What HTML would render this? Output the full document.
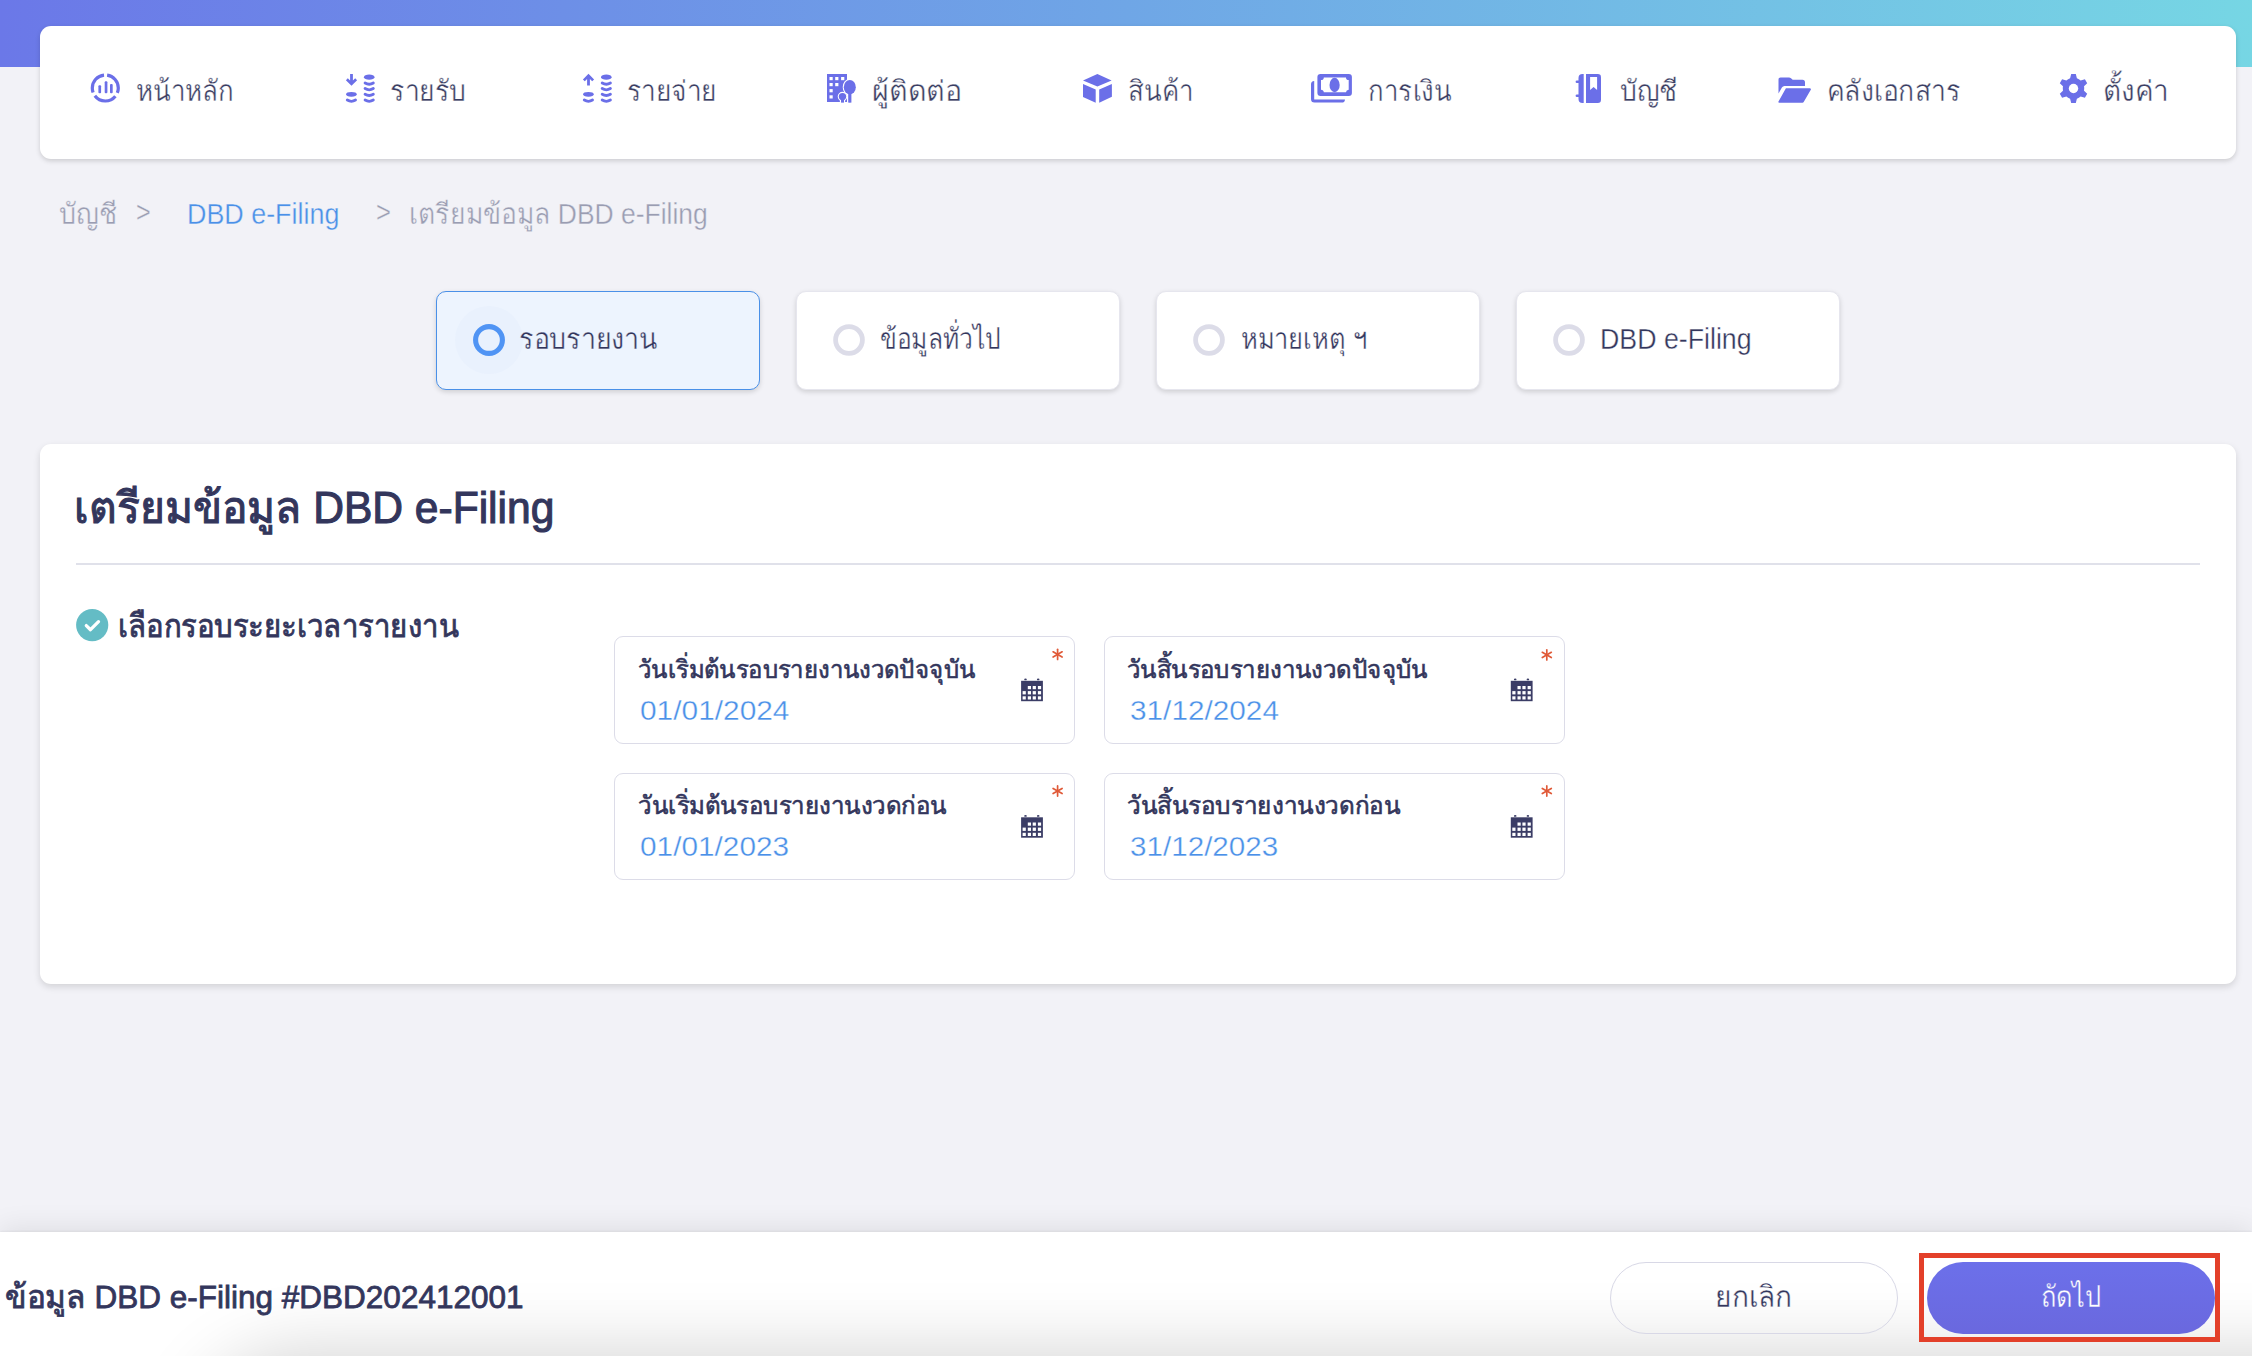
<!DOCTYPE html>
<html><head><meta charset="utf-8">
<style>
*{box-sizing:border-box;margin:0;padding:0}
html,body{width:2252px;height:1356px;overflow:hidden}
body{background:#f2f2f7;font-family:"Liberation Sans",sans-serif;color:#33365c;position:relative}
.tx{position:absolute;white-space:nowrap;transform-origin:0 0}
.abs{position:absolute}
.hdr{left:0;top:0;width:2252px;height:67px;background:linear-gradient(90deg,#6b78e8 0%,#6fa6e6 50%,#76d6e4 100%)}
.nav{left:40px;top:26px;width:2196px;height:133px;background:#fff;border-radius:11px;box-shadow:0 2px 5px rgba(0,0,0,.16)}
.step{top:291px;width:324px;height:99px;background:#fff;border-radius:10px;box-shadow:0 2px 5px rgba(0,0,0,.15);border:1px solid #e6e6ee}
.step.on{background:#edf4fe;border:1.5px solid #4a90e8}
.card{left:40px;top:444px;width:2196px;height:540px;background:#fff;border-radius:11px;box-shadow:0 3px 7px rgba(0,0,0,.13)}
.hr{left:76px;top:562.5px;width:2124px;height:2px;background:#e0e1ea}
.fld{width:461px;height:107.5px;border:1.5px solid #dcdce8;border-radius:9px;background:#fff}
.foot{left:0;top:1232px;width:2252px;height:124px;background:#fff;box-shadow:0 -4px 26px rgba(0,0,0,.085),0 -1px 2px rgba(0,0,0,.05);overflow:hidden}
.fshadow{left:200px;top:127px;width:2300px;height:200px;border-radius:110px;box-shadow:0 0 70px 8px rgba(0,0,0,.17);background:#bbb}
.cancel{left:1610px;top:1262px;width:288px;height:72px;border-radius:36px;border:1.5px solid #d8d8e6}
.next{left:1927px;top:1262px;width:288px;height:72px;border-radius:36px;background:linear-gradient(180deg,#6c70ea,#6a68de)}
.hl{left:1919px;top:1253px;width:301px;height:89px;border:5px solid #e3402a}
</style></head><body>
<div class="abs hdr"></div>
<div class="abs nav"></div>

<!-- nav icons -->
<svg class="abs" style="left:0;top:0" width="2252" height="160" viewBox="0 0 2252 160">
 <g fill="#6b6fe8">
  <!-- home dashboard -->
  <circle cx="105.3" cy="88" r="13" fill="none" stroke="#6b6fe8" stroke-width="3.2" stroke-dasharray="23.5 3.73" stroke-dashoffset="25.35" transform="rotate(-90 105.3 88)"/>
  <rect x="98.4" y="85.3" width="2.7" height="8" rx="1"/>
  <rect x="104.7" y="81.3" width="2.7" height="12" rx="1"/>
  <rect x="110" y="84" width="2.7" height="9.3" rx="1"/>
  <!-- income -->
  <path d="M350.1 74h2.8v6.6l2.3-2.3 1.9 1.9-5.6 5.6-5.6-5.6 1.9-1.9 2.3 2.3z"/>
  <ellipse cx="351.4" cy="94.35" rx="5.3" ry="2.4"/>
  <path d="M347.3 100.10Q351.4 102.60 355.5 100.10" fill="none" stroke="#6b6fe8" stroke-width="2.9" stroke-linecap="round"/>
  <ellipse cx="369.2" cy="77.15" rx="5.3" ry="2.55"/>
  <path d="M365.1 83.00Q369.2 85.50 373.3 83.00" fill="none" stroke="#6b6fe8" stroke-width="2.9" stroke-linecap="round"/>
  <path d="M365.1 88.60Q369.2 91.10 373.3 88.60" fill="none" stroke="#6b6fe8" stroke-width="2.9" stroke-linecap="round"/>
  <path d="M365.1 94.30Q369.2 96.80 373.3 94.30" fill="none" stroke="#6b6fe8" stroke-width="2.9" stroke-linecap="round"/>
  <path d="M365.1 100.10Q369.2 102.60 373.3 100.10" fill="none" stroke="#6b6fe8" stroke-width="2.9" stroke-linecap="round"/>
  <!-- expense -->
  <path d="M587.1 85.6h2.8v-6.6l2.3 2.3 1.9-1.9-5.6-5.6-5.6 5.6 1.9 1.9 2.3-2.3z"/>
  <ellipse cx="588.4" cy="94.35" rx="5.3" ry="2.4"/>
  <path d="M584.3 100.10Q588.4 102.60 592.5 100.10" fill="none" stroke="#6b6fe8" stroke-width="2.9" stroke-linecap="round"/>
  <ellipse cx="606.3" cy="77.15" rx="5.3" ry="2.55"/>
  <path d="M602.2 83.00Q606.3 85.50 610.4 83.00" fill="none" stroke="#6b6fe8" stroke-width="2.9" stroke-linecap="round"/>
  <path d="M602.2 88.60Q606.3 91.10 610.4 88.60" fill="none" stroke="#6b6fe8" stroke-width="2.9" stroke-linecap="round"/>
  <path d="M602.2 94.30Q606.3 96.80 610.4 94.30" fill="none" stroke="#6b6fe8" stroke-width="2.9" stroke-linecap="round"/>
  <path d="M602.2 100.10Q606.3 102.60 610.4 100.10" fill="none" stroke="#6b6fe8" stroke-width="2.9" stroke-linecap="round"/>
  <!-- contacts building -->
  <rect x="827" y="74" width="20" height="28"/>
  <g fill="#fff">
   <rect x="829.5" y="77" width="3.2" height="3.2"/><rect x="835.2" y="77" width="3.2" height="3.2"/><rect x="841.1" y="77" width="3.2" height="3.2"/>
   <rect x="829.5" y="83" width="3.2" height="3.2"/><rect x="835.2" y="83" width="3.2" height="3.2"/>
   <rect x="829.5" y="89.1" width="3.2" height="3.2"/>
   <rect x="829.5" y="95.3" width="3.2" height="3.2"/>
  </g>
  <g stroke="#fff" stroke-width="2.2">
   <ellipse cx="849.8" cy="87.2" rx="6" ry="7.3"/>
   <rect x="848.2" y="93" width="3.2" height="10.5"/>
   <circle cx="842.5" cy="96.6" r="3.7"/>
   <rect x="841" y="98" width="3" height="5.5"/>
  </g>
  <ellipse cx="849.8" cy="87.2" rx="6" ry="7.3"/>
  <rect x="848.2" y="93" width="3.2" height="9.6"/>
  <circle cx="842.5" cy="96.6" r="3.7"/>
  <rect x="841" y="98" width="3" height="4.6"/>
  <!-- cube -->
  <path d="M1097.4 73.9L1111.6 80.5 1097.4 86.6 1083 80.5z"/>
  <path d="M1083 84L1095.7 89.4 1095.7 102.7 1083 97z"/>
  <path d="M1099.2 89.4L1111.9 84 1111.9 96.7 1099.2 102.7z"/>
  <!-- money -->
  <path d="M1311 84.5a3.5 3.5 0 0 1 3.2-3.5v18.4h30.8a3.5 3.5 0 0 1-3.5 3.2h-27a3.5 3.5 0 0 1-3.5-3.5z"/>
  <rect x="1317.4" y="73.9" width="34.5" height="22" rx="3.2"/>
  <path fill="#fff" d="M1323.8 77.4h22.2a2.8 2.8 0 0 0 2.7 2.7v9.6a2.8 2.8 0 0 0-2.7 2.6h-22.2a2.8 2.8 0 0 0-2.8-2.6v-9.6a2.8 2.8 0 0 0 2.8-2.7z"/>
  <ellipse cx="1334.6" cy="85" rx="5.1" ry="7.2"/>
  <!-- book -->
  <path d="M1578.5 78a4 4 0 0 1 4-4h1.2v29h-1.2a4 4 0 0 1-4-4v-2h-1.6a1.3 1.3 0 0 1 0-2.6h1.6v-11.4h-1.6a1.3 1.3 0 0 1 0-2.6h1.6z"/>
  <path d="M1586 74h11.8a3.2 3.2 0 0 1 3.2 3.2v22.6a3.2 3.2 0 0 1-3.2 3.2h-11.8z"/>
  <path fill="#fff" d="M1590.1 77h7v12.9l-3.5-2.9-3.5 2.9z"/>
  <!-- folder -->
  <path d="M1778.5 79.5a2 2 0 0 1 2-2h8.5a3 3 0 0 1 2 .8l1.7 1.4h9.8a2.5 2.5 0 0 1 2.5 2.5v3.8h-20.5a3 3 0 0 0-2.6 1.5l-3.4 6.1z"/>
  <path d="M1785.9 88.3h24a1 1 0 0 1 .9 1.5l-7.1 12.2a1.5 1.5 0 0 1-1.2.7h-23.2a.9.9 0 0 1-.8-1.3z"/>
  <!-- gear -->
  <path d="M2070.10 78.30L2071.20 74.00L2075.80 74.00L2076.90 78.30A10.2 10.2 0 0 1 2080.63 80.46L2084.91 79.26L2087.21 83.24L2084.03 86.34A10.2 10.2 0 0 1 2084.03 90.66L2087.21 93.76L2084.91 97.74L2080.63 96.54A10.2 10.2 0 0 1 2076.90 98.70L2075.80 103.00L2071.20 103.00L2070.10 98.70A10.2 10.2 0 0 1 2066.37 96.54L2062.09 97.74L2059.79 93.76L2062.97 90.66A10.2 10.2 0 0 1 2062.97 86.34L2059.79 83.24L2062.09 79.26L2066.37 80.46A10.2 10.2 0 0 1 2070.10 78.30Z"/>
  <circle cx="2073.5" cy="88.5" r="4.7" fill="#fff"/>
  </g>
</svg>

<!-- steps -->
<div class="abs step on" style="left:436px"></div>
<div class="abs step" style="left:796px"></div>
<div class="abs step" style="left:1156px"></div>
<div class="abs step" style="left:1516px"></div>
<svg class="abs" style="left:0;top:280px" width="2252" height="120" viewBox="0 280 2252 120">
 <circle cx="489" cy="340" r="34" fill="#e9f1fd"/>
 <circle cx="489" cy="340" r="13.4" fill="none" stroke="#5094f4" stroke-width="5.1"/>
 <circle cx="849" cy="340" r="13.4" fill="none" stroke="#dcdce8" stroke-width="4.8"/>
 <circle cx="1209" cy="340" r="13.4" fill="none" stroke="#dcdce8" stroke-width="4.8"/>
 <circle cx="1569" cy="340" r="13.4" fill="none" stroke="#dcdce8" stroke-width="4.8"/>
</svg>

<div class="abs card"></div>
<div class="abs hr"></div>
<svg class="abs" style="left:76px;top:608.7px" width="33" height="33" viewBox="0 0 33 33">
 <circle cx="16.2" cy="16.1" r="16.1" fill="#64bcc5"/>
 <path d="M10.3 16.6l4.2 4.1 8-8" fill="none" stroke="#fff" stroke-width="3.3" stroke-linecap="round" stroke-linejoin="round"/>
</svg>

<div class="abs fld" style="left:614px;top:636px"></div>
<div class="abs fld" style="left:1104px;top:636px"></div>
<div class="abs fld" style="left:614px;top:772.5px"></div>
<div class="abs fld" style="left:1104px;top:772.5px"></div>

<svg class="abs" style="left:0;top:630px" width="2252" height="260" viewBox="0 630 2252 260">
 <defs>
  <g id="cal">
   <rect x="0" y="2.8" width="21.8" height="20.4" fill="#3b3d66"/>
   <ellipse cx="4.4" cy="1.4" rx="1.3" ry=".9" fill="#3b3d66"/>
   <ellipse cx="17.1" cy="1.4" rx="1.3" ry=".9" fill="#3b3d66"/>
   <g fill="#fff">
    <rect x="6.7" y="8" width="3.2" height="3.2"/><rect x="11.6" y="8" width="3.2" height="3.2"/><rect x="16.8" y="8" width="3.2" height="3.2"/>
    <rect x="1.5" y="13.1" width="3.2" height="3.3"/><rect x="6.7" y="13.1" width="3.2" height="3.3"/><rect x="11.6" y="13.1" width="3.2" height="3.3"/><rect x="16.8" y="13.1" width="3.2" height="3.3"/>
    <rect x="1.5" y="18.3" width="3.2" height="3.2"/><rect x="6.7" y="18.3" width="3.2" height="3.2"/><rect x="11.6" y="18.3" width="3.2" height="3.2"/><rect x="16.8" y="18.3" width="3.2" height="3.2"/>
   </g>
  </g>
  <g id="ast" stroke="#e05a38" stroke-width="1.7" stroke-linecap="round">
   <line x1="0" y1="-5.1" x2="0" y2="5.1"/>
   <line x1="-4.5" y1="-2.6" x2="4.5" y2="2.6"/>
   <line x1="-4.5" y1="2.6" x2="4.5" y2="-2.6"/>
  </g>
 </defs>
 <use href="#cal" x="1021.1" y="678"/>
 <use href="#cal" x="1510.8" y="678"/>
 <use href="#cal" x="1021.1" y="814.5"/>
 <use href="#cal" x="1510.8" y="814.5"/>
 <use href="#ast" x="1057.6" y="654.4"/>
 <use href="#ast" x="1546.8" y="654.9"/>
 <use href="#ast" x="1057.6" y="791"/>
 <use href="#ast" x="1546.8" y="791"/>
</svg>

<div class="abs foot"><div class="abs fshadow"></div></div>
<div class="abs cancel"></div>
<div class="abs next"></div>
<div class="abs hl"></div>

<div class="tx" style="left:136.41px;top:73.80px;font-size:29px;line-height:34.8px;font-weight:400;color:#3b3e63;-webkit-text-stroke:0.35px #ffffff;transform:scaleX(0.8934)">หน้าหลัก</div>
<div class="tx" style="left:390.37px;top:73.80px;font-size:29px;line-height:34.8px;font-weight:400;color:#3b3e63;-webkit-text-stroke:0.35px #ffffff;transform:scaleX(0.9139)">รายรับ</div>
<div class="tx" style="left:627.19px;top:73.80px;font-size:29px;line-height:34.8px;font-weight:400;color:#3b3e63;-webkit-text-stroke:0.35px #ffffff;transform:scaleX(0.9053)">รายจ่าย</div>
<div class="tx" style="left:872.02px;top:73.80px;font-size:29px;line-height:34.8px;font-weight:400;color:#3b3e63;-webkit-text-stroke:0.35px #ffffff;transform:scaleX(0.9885)">ผู้ติดต่อ</div>
<div class="tx" style="left:1127.72px;top:73.80px;font-size:29px;line-height:34.8px;font-weight:400;color:#3b3e63;-webkit-text-stroke:0.35px #ffffff;transform:scaleX(0.8913)">สินค้า</div>
<div class="tx" style="left:1368.22px;top:73.80px;font-size:29px;line-height:34.8px;font-weight:400;color:#3b3e63;-webkit-text-stroke:0.35px #ffffff;transform:scaleX(0.8901)">การเงิน</div>
<div class="tx" style="left:1620.08px;top:73.80px;font-size:29px;line-height:34.8px;font-weight:400;color:#3b3e63;-webkit-text-stroke:0.35px #ffffff;transform:scaleX(0.9167)">บัญชี</div>
<div class="tx" style="left:1827.17px;top:73.80px;font-size:29px;line-height:34.8px;font-weight:400;color:#3b3e63;-webkit-text-stroke:0.35px #ffffff;transform:scaleX(0.9161)">คลังเอกสาร</div>
<div class="tx" style="left:2103.47px;top:73.80px;font-size:29px;line-height:34.8px;font-weight:400;color:#3b3e63;-webkit-text-stroke:0.35px #ffffff;transform:scaleX(0.9625)">ตั้งค่า</div>
<div class="tx" style="left:58.77px;top:197.00px;font-size:29px;line-height:34.8px;font-weight:400;color:#9a9db2;-webkit-text-stroke:0.35px #f2f2f7;transform:scaleX(0.9267)">บัญชี</div>
<div class="tx" style="left:136.13px;top:194.50px;font-size:29px;line-height:34.8px;font-weight:400;color:#9a9db2;-webkit-text-stroke:0.35px #f2f2f7;transform:scaleX(0.8667)">&gt;</div>
<div class="tx" style="left:186.65px;top:197.00px;font-size:29px;line-height:34.8px;font-weight:400;color:#4a90e8;-webkit-text-stroke:0.35px #f2f2f7;transform:scaleX(0.9267)">DBD e-Filing</div>
<div class="tx" style="left:375.92px;top:194.50px;font-size:29px;line-height:34.8px;font-weight:400;color:#9a9db2;-webkit-text-stroke:0.35px #f2f2f7;transform:scaleX(0.8800)">&gt;</div>
<div class="tx" style="left:408.58px;top:197.00px;font-size:29px;line-height:34.8px;font-weight:400;color:#9a9db2;-webkit-text-stroke:0.35px #f2f2f7;transform:scaleX(0.9123)">เตรียมข้อมูล DBD e-Filing</div>
<div class="tx" style="left:518.55px;top:322.10px;font-size:29px;line-height:34.8px;font-weight:400;color:#33365c;-webkit-text-stroke:0.35px #edf4fe;transform:scaleX(0.9238)">รอบรายงาน</div>
<div class="tx" style="left:880.45px;top:322.00px;font-size:29px;line-height:34.8px;font-weight:400;color:#33365c;-webkit-text-stroke:0.35px #ffffff;transform:scaleX(0.8500)">ข้อมูลทั่วไป</div>
<div class="tx" style="left:1240.82px;top:322.00px;font-size:29px;line-height:34.8px;font-weight:400;color:#33365c;-webkit-text-stroke:0.35px #ffffff;transform:scaleX(0.8787)">หมายเหตุ ฯ</div>
<div class="tx" style="left:1599.66px;top:322.00px;font-size:29px;line-height:34.8px;font-weight:400;color:#33365c;-webkit-text-stroke:0.35px #ffffff;transform:scaleX(0.9224)">DBD e-Filing</div>
<div class="tx" style="left:74.13px;top:481.70px;font-size:44px;line-height:52.8px;font-weight:400;color:#33365c;-webkit-text-stroke:1.10px #33365c;transform:scaleX(0.9673)">เตรียมข้อมูล DBD e-Filing</div>
<div class="tx" style="left:118.45px;top:606.80px;font-size:32px;line-height:38.4px;font-weight:400;color:#33365c;-webkit-text-stroke:0.80px #33365c;transform:scaleX(0.9166)">เลือกรอบระยะเวลารายงาน</div>
<div class="tx" style="left:638.08px;top:653.70px;font-size:25px;line-height:30.0px;font-weight:400;color:#33365c;-webkit-text-stroke:0.62px #33365c;transform:scaleX(0.9577)">วันเริ่มต้นรอบรายงานงวดปัจจุบัน</div>
<div class="tx" style="left:1127.48px;top:653.70px;font-size:25px;line-height:30.0px;font-weight:400;color:#33365c;-webkit-text-stroke:0.62px #33365c;transform:scaleX(0.9608)">วันสิ้นรอบรายงานงวดปัจจุบัน</div>
<div class="tx" style="left:638.07px;top:789.70px;font-size:25px;line-height:30.0px;font-weight:400;color:#33365c;-webkit-text-stroke:0.62px #33365c;transform:scaleX(0.9648)">วันเริ่มต้นรอบรายงานงวดก่อน</div>
<div class="tx" style="left:1127.26px;top:789.70px;font-size:25px;line-height:30.0px;font-weight:400;color:#33365c;-webkit-text-stroke:0.62px #33365c;transform:scaleX(0.9724)">วันสิ้นรอบรายงานงวดก่อน</div>
<div class="tx" style="left:640.43px;top:693.90px;font-size:28px;line-height:33.6px;font-weight:400;color:#4a90e8;-webkit-text-stroke:0.35px #ffffff;transform:scaleX(1.0667)">01/01/2024</div>
<div class="tx" style="left:1130.34px;top:693.90px;font-size:28px;line-height:33.6px;font-weight:400;color:#4a90e8;-webkit-text-stroke:0.35px #ffffff;transform:scaleX(1.0630)">31/12/2024</div>
<div class="tx" style="left:640.44px;top:829.90px;font-size:28px;line-height:33.6px;font-weight:400;color:#4a90e8;-webkit-text-stroke:0.35px #ffffff;transform:scaleX(1.0638)">01/01/2023</div>
<div class="tx" style="left:1130.44px;top:829.90px;font-size:28px;line-height:33.6px;font-weight:400;color:#4a90e8;-webkit-text-stroke:0.35px #ffffff;transform:scaleX(1.0580)">31/12/2023</div>
<div class="tx" style="left:4.73px;top:1278.40px;font-size:32px;line-height:38.4px;font-weight:400;color:#33365c;-webkit-text-stroke:0.80px #33365c;transform:scaleX(0.9845)">ข้อมูล DBD e-Filing #DBD202412001</div>
<div class="tx" style="left:1715.19px;top:1278.70px;font-size:30px;line-height:36.0px;font-weight:400;color:#33365c;-webkit-text-stroke:0.35px #ffffff;transform:scaleX(0.9351)">ยกเลิก</div>
<div class="tx" style="left:2040.81px;top:1278.90px;font-size:30px;line-height:36.0px;font-weight:400;color:#ffffff;-webkit-text-stroke:0.35px #6b6ce4;transform:scaleX(0.8463)">ถัดไป</div>
<script>(function(){var T=[98.27, 75.86, 89.62, 89.95, 65.07, 83.67, 57.75, 133.75, 65.45, 58.38, 14.68, 152.33, 14.9, 298.74, 138.57, 120.7, 125.71, 151.61, 480.41, 340.97, 337.12, 300.72, 308.73, 273.24, 149.48, 148.98, 149.08, 148.26, 518.53, 76.68, 60.09];var e=document.querySelectorAll(".tx");for(var i=0;i<e.length&&i<T.length;i++){var el=e[i];el.style.transform="none";var w=el.getBoundingClientRect().width;if(w>0){el.style.transform="scaleX("+(T[i]/w).toFixed(4)+")";}}})();</script>
</body></html>
